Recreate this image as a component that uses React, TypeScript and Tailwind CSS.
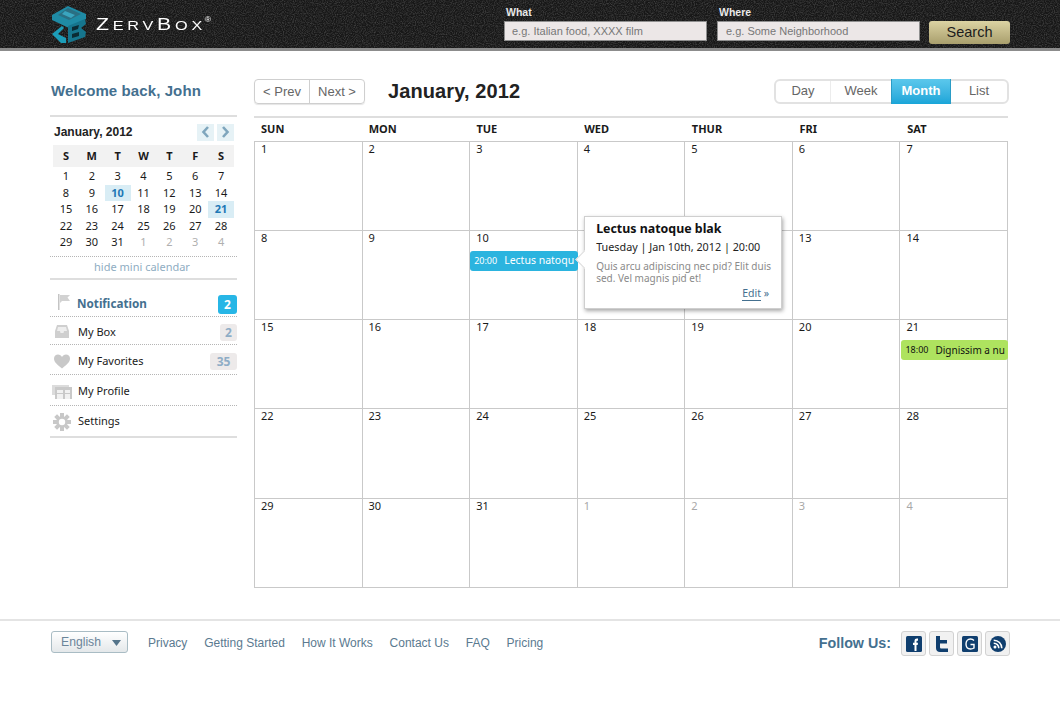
import React from "react";

const tahoma = "font-['Noto_Sans',sans-serif]";
const arial = "font-['Liberation_Sans',Arial,sans-serif]";

function Logo() {
  return (
    <svg width="36" height="38" viewBox="0 0 36 38" className="shrink-0">
      <path d="M1 10 L17 1 L35 9 L35 14 L18 23 L1 15 Z" fill="#1f8ba5" />
      <path d="M17 3 L30 9 L18 15 L7 10 Z" fill="#2a6f83" />
      <path d="M14 6 L24 10 L20 13 L11 9 Z" fill="#3aa5bf" />
      <path d="M1 29 L11 21 L13 23 L7 29 L15 33 L15 38 L10 38 Z" fill="#1c9db8" />
      <path d="M17 21 L34 14 L35 19 L30 23 L35 27 L34 32 L17 38 Z" fill="#16758d" />
      <path d="M21 22 L28 20 L27 24 L21 26 Z M21 29 L28 27 L28 31 L21 33 Z" fill="#0b2b34" />
    </svg>
  );
}

function Header() {
  return (
    <header className="relative h-[51px] bg-[#171717] border-b-[3px] border-[#8c8c8c] overflow-hidden">
      <svg className="absolute inset-0 w-full h-full opacity-30" aria-hidden="true">
        <filter id="grain">
          <feTurbulence type="fractalNoise" baseFrequency="0.9" numOctaves="2" />
          <feColorMatrix values="0 0 0 0 0.6  0 0 0 0 0.6  0 0 0 0 0.6  1.6 0 0 0 -0.6" />
        </filter>
        <rect width="100%" height="100%" filter="url(#grain)" />
      </svg>
      <div className="relative flex h-full">
        <div className="flex items-center w-[504px] pl-[51px] gap-[9px]">
          <Logo />
          <span className={`${arial} text-white tracking-[3px] leading-none flex items-baseline text-[13px] scale-x-125 origin-left`}>
            <span className="text-[17px]">Z</span>ERV<span className="text-[17px]">B</span>OX
            <span className="text-[7px] self-start tracking-normal ml-[-1px]">®</span>
          </span>
        </div>
        <SearchField label="What" placeholder="e.g. Italian food, XXXX film" pad="pl-[7px]" />
        <div className="w-[10px]" />
        <SearchField label="Where" placeholder="e.g. Some Neighborhood" pad="pl-[8px]" />
        <div className="pl-[9px] pt-[19px]">
          <button className={`${arial} w-[81px] h-[23px] rounded-[3px] bg-gradient-to-b from-[#dcd3a3] to-[#a99f6d] text-[#1c1c1c] text-[14.5px] leading-[22px]`}>
            Search
          </button>
        </div>
      </div>
    </header>
  );
}

function SearchField({ label, placeholder, pad }: { label: string; placeholder: string; pad: string }) {
  return (
    <div className="w-[203px]">
      <div className={`${arial} text-[#e8e8e8] font-bold text-[10.5px] leading-[12px] pt-[6px] pl-[2px] h-[21px]`}>{label}</div>
      <div className={`${arial} h-[20px] bg-[#ece7e7] border border-[#8f8f8f] text-[#777777] text-[11px] leading-[18px] ${pad}`}>
        {placeholder}
      </div>
    </div>
  );
}

const miniRows = [
  ["1", "2", "3", "4", "5", "6", "7"],
  ["8", "9", "10", "11", "12", "13", "14"],
  ["15", "16", "17", "18", "19", "20", "21"],
  ["22", "23", "24", "25", "26", "27", "28"],
  ["29", "30", "31", "1", "2", "3", "4"],
];

function MiniCalendar() {
  return (
    <div className="border-t-2 border-[#dedede] mt-[16px]">
      <div className="flex items-center justify-between h-[28px] pl-[4px] pt-[2px]">
        <span className={`${arial} font-bold text-[12px] text-[#222222]`}>January, 2012</span>
        <div className="flex gap-[3px] pr-[3px]">
          <span className="w-[17px] h-[17px] bg-[#e6f2f6] flex items-center justify-center">
            <svg width="9" height="12" viewBox="0 0 9 12"><path d="M7 1 L2.5 6 L7 11" fill="none" stroke="#7fa6bd" strokeWidth="2.6" /></svg>
          </span>
          <span className="w-[17px] h-[17px] bg-[#e6f2f6] flex items-center justify-center">
            <svg width="9" height="12" viewBox="0 0 9 12"><path d="M2 1 L6.5 6 L2 11" fill="none" stroke="#7fa6bd" strokeWidth="2.6" /></svg>
          </span>
        </div>
      </div>
      <div className={`${tahoma} ml-[3px] mr-[3px] text-[11px] text-[#1a1a1a] text-center`}>
        <div className="grid grid-cols-7 bg-[#f2f2f2] h-[22px] leading-[22px] font-bold">
          {["S", "M", "T", "W", "T", "F", "S"].map((d, i) => (
            <span key={i}>{d}</span>
          ))}
        </div>
        <div className="grid grid-cols-7 pt-[1px]">
          {miniRows.flatMap((row, r) =>
            row.map((d, c) => {
              const muted = r === 4 && c > 2;
              const hi = (r === 1 && c === 2) || (r === 2 && c === 6);
              return (
                <span
                  key={`${r}-${c}`}
                  className={`h-[16.5px] leading-[16.5px] ${muted ? "text-[#b0b0b0]" : ""} ${hi ? "bg-[#d9edf5] text-[#1f78b5] font-bold" : ""}`}
                >
                  {d}
                </span>
              );
            })
          )}
        </div>
      </div>
      <div className={`${tahoma} mt-[5px] border-t border-dotted border-[#b5b5b5] h-[22px] leading-[20px] text-center text-[11px] text-[#8fadc2] pr-[3px]`}>
        hide mini calendar
      </div>
      <div className="border-t-2 border-[#dedede]" />
    </div>
  );
}

const Flag = () => (
  <svg width="15" height="16" viewBox="0 0 15 16"><rect x="0" y="0" width="1.5" height="16" fill="#c4c4c4" /><path d="M2 1 L12 1 L9.5 3.5 L12 7 L4 7 L2 9 Z" fill="#d2d2d2" /></svg>
);
const Tray = () => (
  <svg width="16" height="14" viewBox="0 0 16 14"><path d="M3 0 H13 L15 6 V13 H1 V6 Z" fill="#cfcfcf" /><path d="M4 2 H12 L13 6 H10 L9.5 8 H6.5 L6 6 H3 Z" fill="#eeeeee" /></svg>
);
const Heart = () => (
  <svg width="16" height="15" viewBox="0 0 16 15"><path d="M8 14.5 C3 10.5 0 8 0 4.5 C0 2 2 0.5 4 0.5 C5.8 0.5 7.2 1.5 8 3 C8.8 1.5 10.2 0.5 12 0.5 C14 0.5 16 2 16 4.5 C16 8 13 10.5 8 14.5 Z" fill="#c8c8c8" /></svg>
);
const Profile = () => (
  <svg width="20" height="14" viewBox="0 0 20 14"><rect x="0" y="0" width="17" height="10" fill="#dcdcdc" /><rect x="3" y="2" width="17" height="12" fill="#c9c9c9" /><rect x="5" y="5" width="6" height="3" fill="#f1f1f1" /><rect x="13" y="5" width="5" height="3" fill="#f1f1f1" /><rect x="5" y="9" width="6" height="5" fill="#f1f1f1" /><rect x="13" y="9" width="5" height="5" fill="#f1f1f1" /></svg>
);
const Gear = () => (
  <svg width="18" height="18" viewBox="0 0 18 18">
    <g fill="#c8c8c8">
      {[0, 45, 90, 135].map((a) => (
        <rect key={a} x="7" y="0" width="4" height="18" transform={`rotate(${a} 9 9)`} />
      ))}
    </g>
    <circle cx="9" cy="9" r="5.8" fill="#c8c8c8" />
    <circle cx="9" cy="9" r="3.2" fill="#ffffff" />
  </svg>
);

function NavRow({ icon, label, badge, h, last, active }: { icon: React.ReactNode; label: string; badge?: string; h: string; last?: boolean; active?: boolean }) {
  return (
    <div className={`flex items-center ${h} ${last ? "pt-[2px]" : "border-b border-dotted border-[#b5b5b5]"} ${active ? "pt-[3px]" : last ? "" : "pt-[4px]"}`}>
      <span className={`w-[24px] flex justify-center mr-[4px] ${active ? "pl-[6px] pb-[5px]" : ""}`}>{icon}</span>
      <span className={`${tahoma} flex-1 ${active ? "font-bold text-[#44708f] text-[11.7px] -ml-[1px]" : "text-[#1a1a1a] text-[11px]"}`}>{label}</span>
      {badge && (
        <span className={`${tahoma} font-bold text-[12px] rounded-[3px] text-center ${active ? "w-[19px] h-[19px] leading-[19px] bg-[#27b6e6] text-white" : `h-[17px] leading-[17px] ${badge.length > 1 ? "w-[27px]" : "w-[17px]"} bg-[#edeaea] text-[#8fadc6]`}`}>
          {badge}
        </span>
      )}
    </div>
  );
}

function Sidebar() {
  return (
    <aside className="w-[187px] shrink-0">
      <h2 className={`${arial} font-bold text-[#44708f] text-[15px] leading-[17px] tracking-[0.1px] mt-[31px] pl-[1px]`}>Welcome back, John</h2>
      <MiniCalendar />
      <div className="pt-[10px] border-b-2 border-[#dedede]">
        <NavRow icon={<Flag />} label="Notification" badge="2" h="h-[27px]" active />
        <NavRow icon={<Tray />} label="My Box" badge="2" h="h-[28px]" />
        <NavRow icon={<Heart />} label="My Favorites" badge="35" h="h-[30px]" />
        <NavRow icon={<Profile />} label="My Profile" h="h-[31px]" />
        <NavRow icon={<Gear />} label="Settings" h="h-[30px]" last />
      </div>
    </aside>
  );
}

function Toolbar() {
  return (
    <div className="flex items-center h-[65px] pt-[15px]">
      <div className={`${arial} flex h-[25px] w-[111px] border border-[#cfcfcf] rounded-[4px] text-[#666666] text-[13px] leading-[23px] text-center shadow-[0_1px_1px_#e5e5e5]`}>
        <span className="w-[55px] border-r border-[#cfcfcf]">&lt; Prev</span>
        <span className="flex-1">Next &gt;</span>
      </div>
      <h1 className={`${arial} font-bold text-[20px] text-[#222222] ml-[23px] flex-1 tracking-[0.1px]`}>January, 2012</h1>
      <div className={`${arial} flex h-[25px] w-[235px] border-2 border-[#e2e2e2] rounded-[6px] text-[#666666] text-[13px] leading-[20px] text-center mr-[-1px]`}>
        <span className="w-[55px] border-r border-[#ececec]">Day</span>
        <span className="w-[60px]">Week</span>
        <span className="w-[60px] bg-gradient-to-b from-[#5bc8ec] to-[#18a5d8] text-white font-bold h-[25px] -mt-[2px] leading-[24px] border-x border-[#2a9cc6]">Month</span>
        <span className="flex-1">List</span>
      </div>
    </div>
  );
}

const weekdays = ["SUN", "MON", "TUE", "WED", "THUR", "FRI", "SAT"];

function Event({ time, title, green }: { time: string; title: string; green?: boolean }) {
  return (
    <div className={`${tahoma} absolute right-[-1px] top-[20px] h-[20px] rounded-[3px] flex items-center whitespace-nowrap overflow-hidden z-10 ${green ? "left-[1px] pl-[4px] bg-[#aee35f] text-[#111111] text-[10px]" : "left-0 pl-[4px] bg-[#2bb4df] text-white text-[10.5px]"}`}>
      <span className="text-[9px] mr-[7px]">{time}</span>
      <span>{title}</span>
    </div>
  );
}

function Popover() {
  return (
    <div className="absolute left-[114px] top-[-15px] w-[198px] h-[93px] bg-white border border-[#cfcfcf] shadow-[1px_2px_4px_rgba(0,0,0,0.35)] z-20 pl-[11px] pr-[8px] pt-[4px]">
      <span className="absolute left-[-7px] top-[36px] w-[13px] h-[13px] rotate-45 bg-white border-l border-b border-[#dcdcdc]" />
      <div className={`${tahoma} relative font-bold text-[12.4px] leading-[16px] text-[#111111]`}>Lectus natoque blak</div>
      <div className={`${tahoma} relative text-[10.8px] leading-[18px] text-[#222222] mt-[1px] whitespace-nowrap`}>Tuesday | Jan 10th, 2012 | 20:00</div>
      <div className={`${tahoma} relative text-[10px] leading-[12px] text-[#8a8a8a] mt-[4px]`}>Quis arcu adipiscing nec pid? Elit duis sed. Vel magnis pid et!</div>
      <div className={`${tahoma} relative text-[10.5px] text-right text-[#44708f] leading-[14px] mt-[2px] pr-[4px]`}>
        <span className="border-b border-[#44708f]">Edit</span> »
      </div>
    </div>
  );
}

function Calendar() {
  const cells: { label: string; muted: boolean }[] = [];
  for (let i = 1; i <= 31; i++) cells.push({ label: String(i), muted: false });
  for (let i = 1; i <= 4; i++) cells.push({ label: String(i), muted: true });
  return (
    <div>
      <div className="border-t-2 border-[#dedede] grid grid-cols-7 h-[25px]">
        {weekdays.map((d) => (
          <span key={d} className={`${tahoma} font-bold text-[11px] leading-[22px] pl-[7px] text-[#1a1a1a]`}>{d}</span>
        ))}
      </div>
      <div className="grid grid-cols-7 border-l border-t border-[#c9c9c9]">
        {cells.map((c, i) => (
          <div key={i} className={`relative border-r border-b border-[#c9c9c9] ${i >= 21 && i < 28 ? "h-[90px]" : "h-[89px]"}`}>
            <span className={`${tahoma} block pl-[6px] -mt-[1px] text-[11px] leading-[15px] ${c.muted ? "text-[#a8a8a8]" : "text-[#1a1a1a]"}`}>{c.label}</span>
            {i === 9 && <Event time="20:00" title="Lectus natoqu" />}
            {i === 9 && <Popover />}
            {i === 20 && <Event time="18:00" title="Dignissim a nu" green />}
          </div>
        ))}
      </div>
    </div>
  );
}

const FbIcon = () => (
  <svg width="16" height="16" viewBox="0 0 16 16"><rect width="16" height="16" rx="1.5" fill="#0f3e6e" /><path d="M8.5 15 V9 H7 V6.8 H8.5 V5 C8.5 3.3 9.5 2.5 11 2.5 H12 V4.7 H11.2 C10.6 4.7 10.5 5 10.5 5.4 V6.8 H12 L11.7 9 H10.5 V15 Z" fill="#ffffff" /></svg>
);
const TwIcon = () => (
  <svg width="16" height="18" viewBox="0 0 16 18"><path d="M2 1 H6 V5 H13 V8.5 H6 V12 C6 13 6.5 13.5 7.5 13.5 H14 V17 H6 C3.5 17 2 15.5 2 13 Z" fill="#0f3e6e" /></svg>
);
const GIcon = () => (
  <svg width="16" height="16" viewBox="0 0 16 16"><rect width="16" height="16" rx="1.5" fill="#0f3e6e" /><path d="M12 4.5 C11 3.5 10 3 8.5 3 C5.7 3 4 5.2 4 8 C4 10.8 5.7 13 8.5 13 C10 13 11 12.6 12 12 V8.5 H8.5" fill="none" stroke="#ffffff" strokeWidth="1.4" /></svg>
);
const RssIcon = () => (
  <svg width="16" height="16" viewBox="0 0 16 16"><circle cx="8" cy="8" r="8" fill="#0f3e6e" /><circle cx="5" cy="11" r="1.5" fill="#fff" /><path d="M3.7 7.2 A5 5 0 0 1 8.8 12.3 M3.7 4.2 A8 8 0 0 1 11.8 12.3" fill="none" stroke="#fff" strokeWidth="1.6" /></svg>
);

function Footer() {
  const links = ["Privacy", "Getting Started", "How It Works", "Contact Us", "FAQ", "Pricing"];
  const icons = [<FbIcon key="f" />, <TwIcon key="t" />, <GIcon key="g" />, <RssIcon key="r" />];
  return (
    <footer className="border-t-2 border-[#e4e4e4] mt-[31px] h-[99px]">
      <div className="flex items-start pl-[51px] pr-[50px] pt-[10px]">
        <div className={`${arial} w-[77px] h-[22px] flex items-center justify-between pl-[9px] pr-[6px] pt-[1px] border border-[#a9bcc4] rounded-[3px] bg-gradient-to-b from-[#ffffff] to-[#e4e8ea] text-[#6b8599] text-[12.2px]`}>
          English
          <svg width="9" height="6" viewBox="0 0 9 6"><path d="M0 0 H9 L4.5 6 Z" fill="#54748a" /></svg>
        </div>
        <nav className={`${arial} flex gap-[16.8px] ml-[20px] text-[#5b7a90] text-[12px] leading-[24px] flex-1`}>
          {links.map((l) => (
            <span key={l}>{l}</span>
          ))}
        </nav>
        <span className={`${arial} font-bold text-[14.3px] leading-[25px] text-[#44708f] mr-[10px]`}>Follow Us:</span>
        <div className="flex gap-[3px]">
          {icons.map((ic, i) => (
            <span key={i} className="w-[25px] h-[25px] flex items-center justify-center rounded-[3px] border border-[#d2d2d2] bg-[#f1f1f1]">
              {ic}
            </span>
          ))}
        </div>
      </div>
    </footer>
  );
}

export default function App() {
  return (
    <div className="w-[1060px] min-h-[720px] bg-white">
      <Header />
      <div className="flex pl-[50px] gap-[17px]">
        <Sidebar />
        <main className="w-[754px]">
          <Toolbar />
          <Calendar />
        </main>
      </div>
      <Footer />
    </div>
  );
}
